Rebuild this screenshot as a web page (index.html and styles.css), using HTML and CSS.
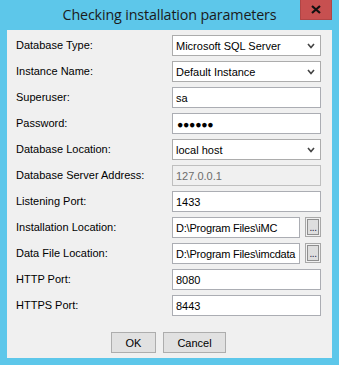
FILE: index.html
```html
<!DOCTYPE html>
<html>
<head>
<meta charset="utf-8">
<link rel="stylesheet" href="styles.css">
</head>
<body>
<div class="window">
  <div class="titlebar">
    <span class="spacer"></span>
    <span class="title">Checking installation parameters</span>
    <span class="close-wrap">
      <span class="close">
        <svg width="10" height="9" viewBox="0 0 10 9"><path d="M1 1 L9 8 M9 1 L1 8" stroke="#111" stroke-width="2.2" fill="none"/></svg>
      </span>
    </span>
  </div>
  <div class="client">
    <div class="form">
      <div class="label">Database Type:</div>
      <div class="field select"><span>Microsoft SQL Server</span><svg class="chev" width="8" height="6" viewBox="0 0 8 6"><path d="M1 1 L4 4.5 L7 1" stroke="#444" stroke-width="1.6" fill="none"/></svg></div>

      <div class="label">Instance Name:</div>
      <div class="field select"><span>Default Instance</span><svg class="chev" width="8" height="6" viewBox="0 0 8 6"><path d="M1 1 L4 4.5 L7 1" stroke="#444" stroke-width="1.6" fill="none"/></svg></div>

      <div class="label">Superuser:</div>
      <div class="field"><span>sa</span></div>

      <div class="label">Password:</div>
      <div class="field"><span class="dots">●●●●●●</span></div>

      <div class="label">Database Location:</div>
      <div class="field select"><span>local host</span><svg class="chev" width="8" height="6" viewBox="0 0 8 6"><path d="M1 1 L4 4.5 L7 1" stroke="#444" stroke-width="1.6" fill="none"/></svg></div>

      <div class="label">Database Server Address:</div>
      <div class="field disabled"><span>127.0.0.1</span></div>

      <div class="label">Listening Port:</div>
      <div class="field"><span>1433</span></div>

      <div class="label">Installation Location:</div>
      <div class="browse-row">
        <div class="field grow"><span class="path">D:\Program Files\iMC</span></div>
        <div class="browse"><span class="browse-inner">...</span></div>
      </div>

      <div class="label">Data File Location:</div>
      <div class="browse-row">
        <div class="field grow"><span class="path">D:\Program Files\imcdata</span></div>
        <div class="browse"><span class="browse-inner">...</span></div>
      </div>

      <div class="label">HTTP Port:</div>
      <div class="field"><span>8080</span></div>

      <div class="label">HTTPS Port:</div>
      <div class="field"><span>8443</span></div>
    </div>
    <div class="buttons">
      <div class="btn ok">OK</div>
      <div class="btn cancel">Cancel</div>
    </div>
  </div>
</div>
</body>
</html>
```

FILE: styles.css
```css
* { box-sizing: border-box; }
html, body {
  margin: 0;
  padding: 0;
  background: #5dc7ea;
}
.window {
  width: 339px;
  height: 365px;
  background: #5dc7ea;
  display: flex;
  flex-direction: column;
  font-family: "Liberation Sans", Arial, sans-serif;
  font-size: 11px;
  color: #000;
}
.titlebar {
  height: 30px;
  display: grid;
  grid-template-columns: 1fr auto 1fr;
  align-items: start;
}
.title {
  font-family: "Open Sans", "Noto Sans", sans-serif;
  font-size: 14.3px;
  color: #1b1b1b;
  line-height: 30px;
  letter-spacing: -0.15px;
}
.close-wrap {
  display: flex;
  justify-content: flex-end;
  padding-right: 7px;
}
.close {
  width: 32px;
  height: 20px;
  background: #c75050;
  display: flex;
  align-items: center;
  justify-content: center;
  border: 1px solid #b04545;
  border-top: none;
}
.client {
  margin: 0 7px 7px 7px;
  flex: 1;
  background: #f0f0f0;
  padding: 5px 11px 0 9px;
  display: flex;
  flex-direction: column;
}
.form {
  display: grid;
  grid-template-columns: 156px 149px;
  grid-auto-rows: 21px;
  row-gap: 5px;
  align-items: center;
}
.label {
  line-height: 21px;
  white-space: nowrap;
}
.field {
  height: 21px;
  border: 1px solid #abadb3;
  background: #fff;
  display: flex;
  align-items: center;
  padding-left: 3px;
  white-space: nowrap;
  overflow: hidden;
}
.field.select {
  border-color: #acacac;
  justify-content: space-between;
  padding-right: 5px;
}
.field.disabled {
  background: #f0f0f0;
  border-color: #bfbfbf;
  color: #6d6d6d;
}
.dots {
  font-size: 10.5px;
  letter-spacing: -0.3px;
  padding-left: 1px;
}
.path {
  letter-spacing: -0.2px;
}
.browse-row {
  display: flex;
  gap: 5px;
  height: 21px;
}
.grow { flex: 1; }
.browse {
  width: 16px;
  height: 20px;
  border: 1px solid #a8a8a8;
  padding: 1px;
  background: #f0f0f0;
}
.browse-inner {
  display: flex;
  width: 100%;
  height: 100%;
  border: 1px solid #8e8e8e;
  background: #dedede;
  align-items: flex-end;
  justify-content: center;
  font-size: 10px;
  line-height: 10px;
  padding-bottom: 1px;
  color: #202040;
  letter-spacing: -0.5px;
}
.buttons {
  margin-top: 16px;
  display: flex;
  justify-content: center;
  gap: 7px;
}
.btn {
  height: 21px;
  border: 1px solid #adadad;
  background: #e1e1e1;
  display: flex;
  align-items: center;
  justify-content: center;
}
.ok { width: 45px; }
.cancel { width: 63px; }
```
